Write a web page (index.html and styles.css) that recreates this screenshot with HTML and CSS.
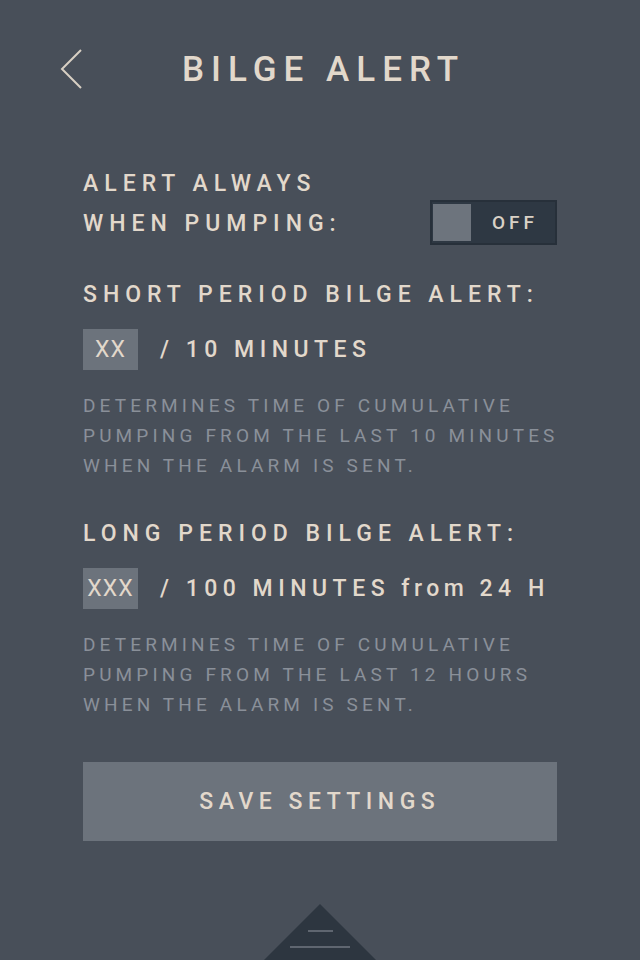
FILE: index.html
```html
<!DOCTYPE html>
<html>
<head>
<meta charset="utf-8">
<link rel="stylesheet" href="styles.css">
</head>
<body>
<div class="screen">
  <header class="header">
    <svg class="back" width="24" height="42" viewBox="0 0 24 42"><polyline points="21,2 2,21 21,40" fill="none" stroke="#d8d0c4" stroke-width="2"/></svg>
    <h1 class="title">BILGE ALERT</h1>
  </header>
  <main class="content">
    <div class="always-row">
      <div class="label two-line">ALERT ALWAYS<br>WHEN PUMPING:</div>
      <div class="toggle"><span class="knob"></span><span class="toggle-text">OFF</span></div>
    </div>
    <div class="label section-title first">SHORT PERIOD BILGE ALERT:</div>
    <div class="value-row">
      <span class="box">XX</span>
      <span class="label value-text">/ 10 MINUTES</span>
    </div>
    <p class="desc">DETERMINES TIME OF CUMULATIVE<br>PUMPING FROM THE LAST 10 MINUTES<br>WHEN THE ALARM IS SENT.</p>
    <div class="label section-title second">LONG PERIOD BILGE ALERT:</div>
    <div class="value-row long">
      <span class="box">XXX</span>
      <span class="label value-text">/ 100 MINUTES <span class="lower">from</span> 24 H</span>
    </div>
    <p class="desc">DETERMINES TIME OF CUMULATIVE<br>PUMPING FROM THE LAST 12 HOURS<br>WHEN THE ALARM IS SENT.</p>
    <button class="save">SAVE SETTINGS</button>
  </main>
  <footer class="footer">
    <svg width="640" height="56" viewBox="0 0 640 56">
      <polygon points="320,0 376,56 264,56" fill="#2d3640"/>
      <line x1="308" y1="27" x2="333" y2="27" stroke="#5f6670" stroke-width="2"/>
      <line x1="290" y1="43" x2="350" y2="43" stroke="#5f6670" stroke-width="2"/>
    </svg>
  </footer>
</div>
</body>
</html>
```
FILE: styles.css
```css
* { box-sizing: border-box; }
html, body { margin: 0; padding: 0; }
body {
  background: #484f59;
  font-family: Roboto, "Liberation Sans", sans-serif;
  color: #e2d8cb;
}
.screen {
  width: 640px;
  height: 960px;
  display: flex;
  flex-direction: column;
  overflow: hidden;
}
.header {
  height: 139px;
  position: relative;
  display: flex;
  align-items: center;
  justify-content: center;
}
.back {
  position: absolute;
  left: 60px;
  top: 48px;
}
.title {
  margin: 0;
  font-size: 35px;
  font-weight: 500;
  letter-spacing: 7px;
  padding-left: 7px;
  line-height: 40px;
}
.content {
  padding: 25px 83px 0;
  display: flex;
  flex-direction: column;
}
.label {
  font-size: 23px;
  font-weight: 500;
  letter-spacing: 6px;
  line-height: 40px;
  white-space: nowrap;
}
.always-row {
  display: flex;
  justify-content: space-between;
  align-items: flex-end;
}
.toggle {
  width: 127px;
  height: 45px;
  background: #2e3843;
  border: 2px solid #27303a;
  margin-bottom: -1px;
  display: flex;
  align-items: center;
  padding-left: 1px;
}
.knob {
  width: 38px;
  height: 37px;
  background: #6d747d;
}
.toggle-text {
  flex: 1;
  text-align: center;
  font-size: 19px;
  font-weight: 500;
  letter-spacing: 4px;
  padding-left: 4px;
  color: #d9d1c6;
}
.section-title.first { margin-top: 31px; }
.section-title.second { margin-top: 33px; }
.value-row {
  display: flex;
  align-items: center;
  gap: 22px;
  margin-top: 14px;
}
.value-row.long { margin-top: 14px; }
.box {
  width: 55px;
  height: 41px;
  background: #6c737c;
  display: flex;
  align-items: center;
  justify-content: center;
  font-size: 23px;
  font-weight: 400;
  letter-spacing: 1px;
}
.value-text { line-height: 41px; letter-spacing: 5.5px; }
.lower { letter-spacing: 4.5px; }
.desc {
  margin: 21px 0 0;
  font-size: 19px;
  font-weight: 400;
  letter-spacing: 4.15px;
  line-height: 30px;
  color: #8a9099;
  white-space: nowrap;
}
.save {
  margin-top: 42px;
  height: 79px;
  width: 100%;
  border: none;
  background: #6c737c;
  color: #e2d8cb;
  font-family: Roboto, "Liberation Sans", sans-serif;
  font-size: 23px;
  font-weight: 500;
  letter-spacing: 5.5px;
  padding-left: 5.5px;
}
.footer {
  margin-top: auto;
  height: 56px;
  display: flex;
}
```
